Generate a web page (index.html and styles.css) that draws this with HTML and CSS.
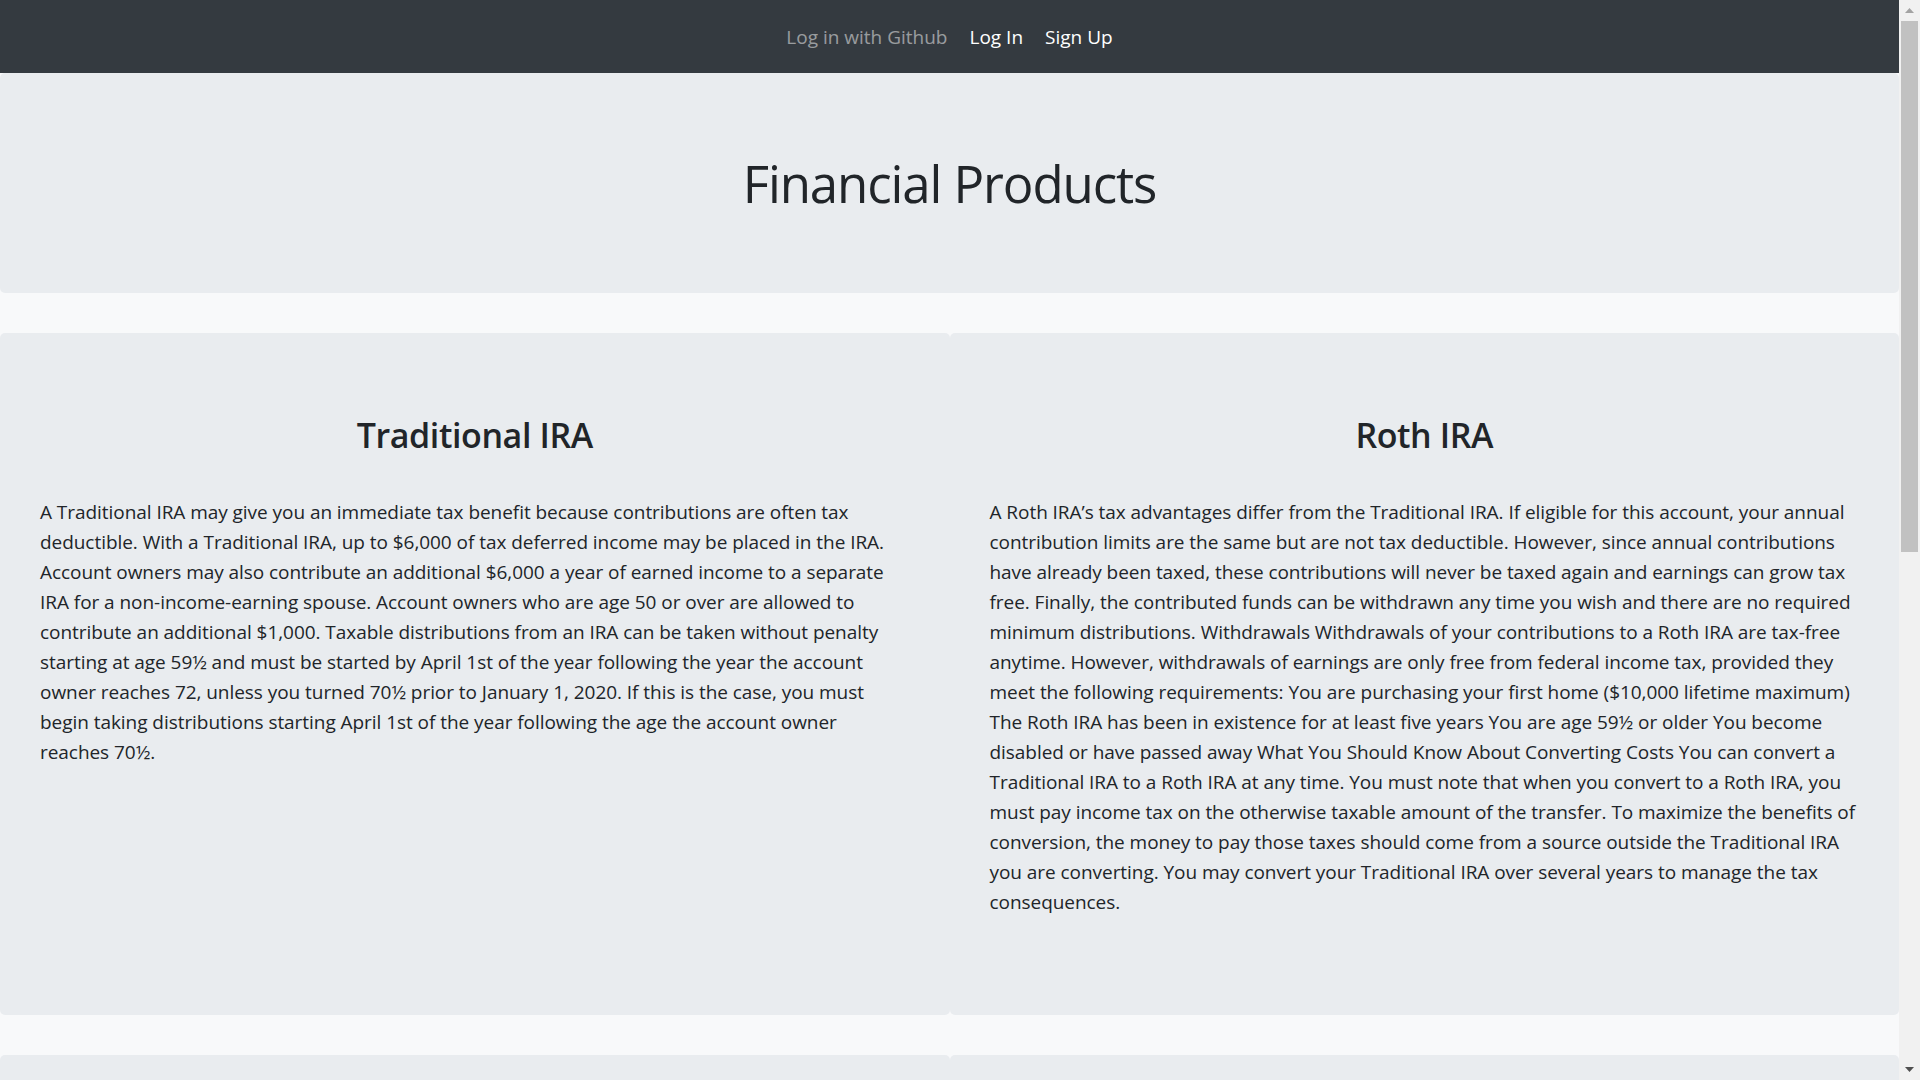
FILE: index.html
```html
<!DOCTYPE html>
<html lang="en">
<head>
<meta charset="utf-8">
<title>Financial Products</title>
<link rel="stylesheet" href="styles.css">
</head>
<body>
<div class="page">
  <nav class="navbar">
    <a class="nav-link muted" href="#">Log in with Github</a>
    <a class="nav-link" href="#">Log In</a>
    <a class="nav-link" href="#">Sign Up</a>
  </nav>
  <header class="hero">
    <h1 class="hero-title">Financial Products</h1>
  </header>
  <section class="row">
    <article class="card">
      <h2 class="card-title">Traditional IRA</h2>
      <p class="card-text">A Traditional IRA may give you an immediate tax benefit because contributions are often tax deductible. With a Traditional IRA, up to $6,000 of tax deferred income may be placed in the IRA. Account owners may also contribute an additional $6,000 a year of earned income to a separate IRA for a non-income-earning spouse. Account owners who are age 50 or over are allowed to contribute an additional $1,000. Taxable distributions from an IRA can be taken without penalty starting at age 59½ and must be started by April 1st of the year following the year the account owner reaches 72, unless you turned 70½ prior to January 1, 2020. If this is the case, you must begin taking distributions starting April 1st of the year following the age the account owner reaches 70½.</p>
    </article>
    <article class="card">
      <h2 class="card-title">Roth IRA</h2>
      <p class="card-text">A Roth IRA’s tax advantages differ from the Traditional IRA. If eligible for this account, your annual contribution limits are the same but are not tax deductible. However, since annual contributions have already been taxed, these contributions will never be taxed again and earnings can grow tax free. Finally, the contributed funds can be withdrawn any time you wish and there are no required minimum distributions. Withdrawals Withdrawals of your contributions to a Roth IRA are tax-free anytime. However, withdrawals of earnings are only free from federal income tax, provided they meet the following requirements: You are purchasing your first home ($10,000 lifetime maximum) The Roth IRA has been in existence for at least five years You are age 59½ or older You become disabled or have passed away What You Should Know About Converting Costs You can convert a Traditional IRA to a Roth IRA at any time. You must note that when you convert to a Roth IRA, you must pay income tax on the otherwise taxable amount of the transfer. To maximize the benefits of conversion, the money to pay those taxes should come from a source outside the Traditional IRA you are converting. You may convert your Traditional IRA over several years to manage the tax consequences.</p>
    </article>
  </section>
  <section class="row">
    <article class="card card-tall"></article>
    <article class="card card-tall"></article>
  </section>
</div>
<div class="scrollbar" aria-hidden="true">
  <div class="sb-btn">
    <svg width="9" height="5" viewBox="0 0 9 5"><polygon points="0,5 9,5 4.5,0" fill="#a3a3a3"/></svg>
  </div>
  <div class="sb-thumb"></div>
  <div class="sb-rest"></div>
  <div class="sb-btn">
    <svg width="9" height="5" viewBox="0 0 9 5"><polygon points="0,0 9,0 4.5,5" fill="#505050"/></svg>
  </div>
</div>
</body>
</html>
```

FILE: styles.css
```css
html,
body {
  height: 100%;
}

body {
  margin: 0;
  display: flex;
  overflow: hidden;
  background: #f8f9fa;
  color: #212529;
  font-family: "Open Sans", "Noto Sans", "DejaVu Sans", sans-serif;
}

.page {
  flex: 1;
  min-width: 0;
  overflow: hidden;
}

.scrollbar {
  flex: 0 0 21px;
  display: flex;
  flex-direction: column;
  background: #f1f1f1;
}

.sb-btn {
  height: 21px;
  display: flex;
  align-items: center;
  justify-content: center;
}

.sb-btn svg {
  display: block;
}

.sb-thumb {
  height: 531px;
  margin: 0 2px;
  background: #c1c1c1;
}

.sb-rest {
  flex: 1;
}

.navbar {
  display: flex;
  justify-content: center;
  background: #343a40;
  padding: 22px 0 21px;
}

.nav-link {
  font-size: 19px;
  line-height: 30px;
  padding: 0 11px;
  color: #ffffff;
  text-decoration: none;
}

.nav-link.muted {
  color: rgba(255, 255, 255, 0.5);
}

.hero {
  background: #e9ecef;
  border-radius: 5px;
  padding: 78px 0;
  margin-bottom: 40px;
  text-align: center;
}

.hero-title {
  margin: 0;
  font-size: 51px;
  line-height: 64px;
  font-weight: 400;
  letter-spacing: -1.1px;
}

.row {
  display: grid;
  grid-template-columns: 1fr 1fr;
  margin-bottom: 40px;
}

.card {
  background: #e9ecef;
  border-radius: 5px;
  padding: 81px 40px 98px;
}

.card-title {
  margin: 0 0 41px;
  text-align: center;
  font-size: 34px;
  line-height: 42px;
  font-weight: 600;
  letter-spacing: -0.4px;
}

.card-text {
  margin: 0;
  font-size: 19px;
  line-height: 30px;
  letter-spacing: -0.05px;
}

.card-tall {
  min-height: 836px;
}
```
